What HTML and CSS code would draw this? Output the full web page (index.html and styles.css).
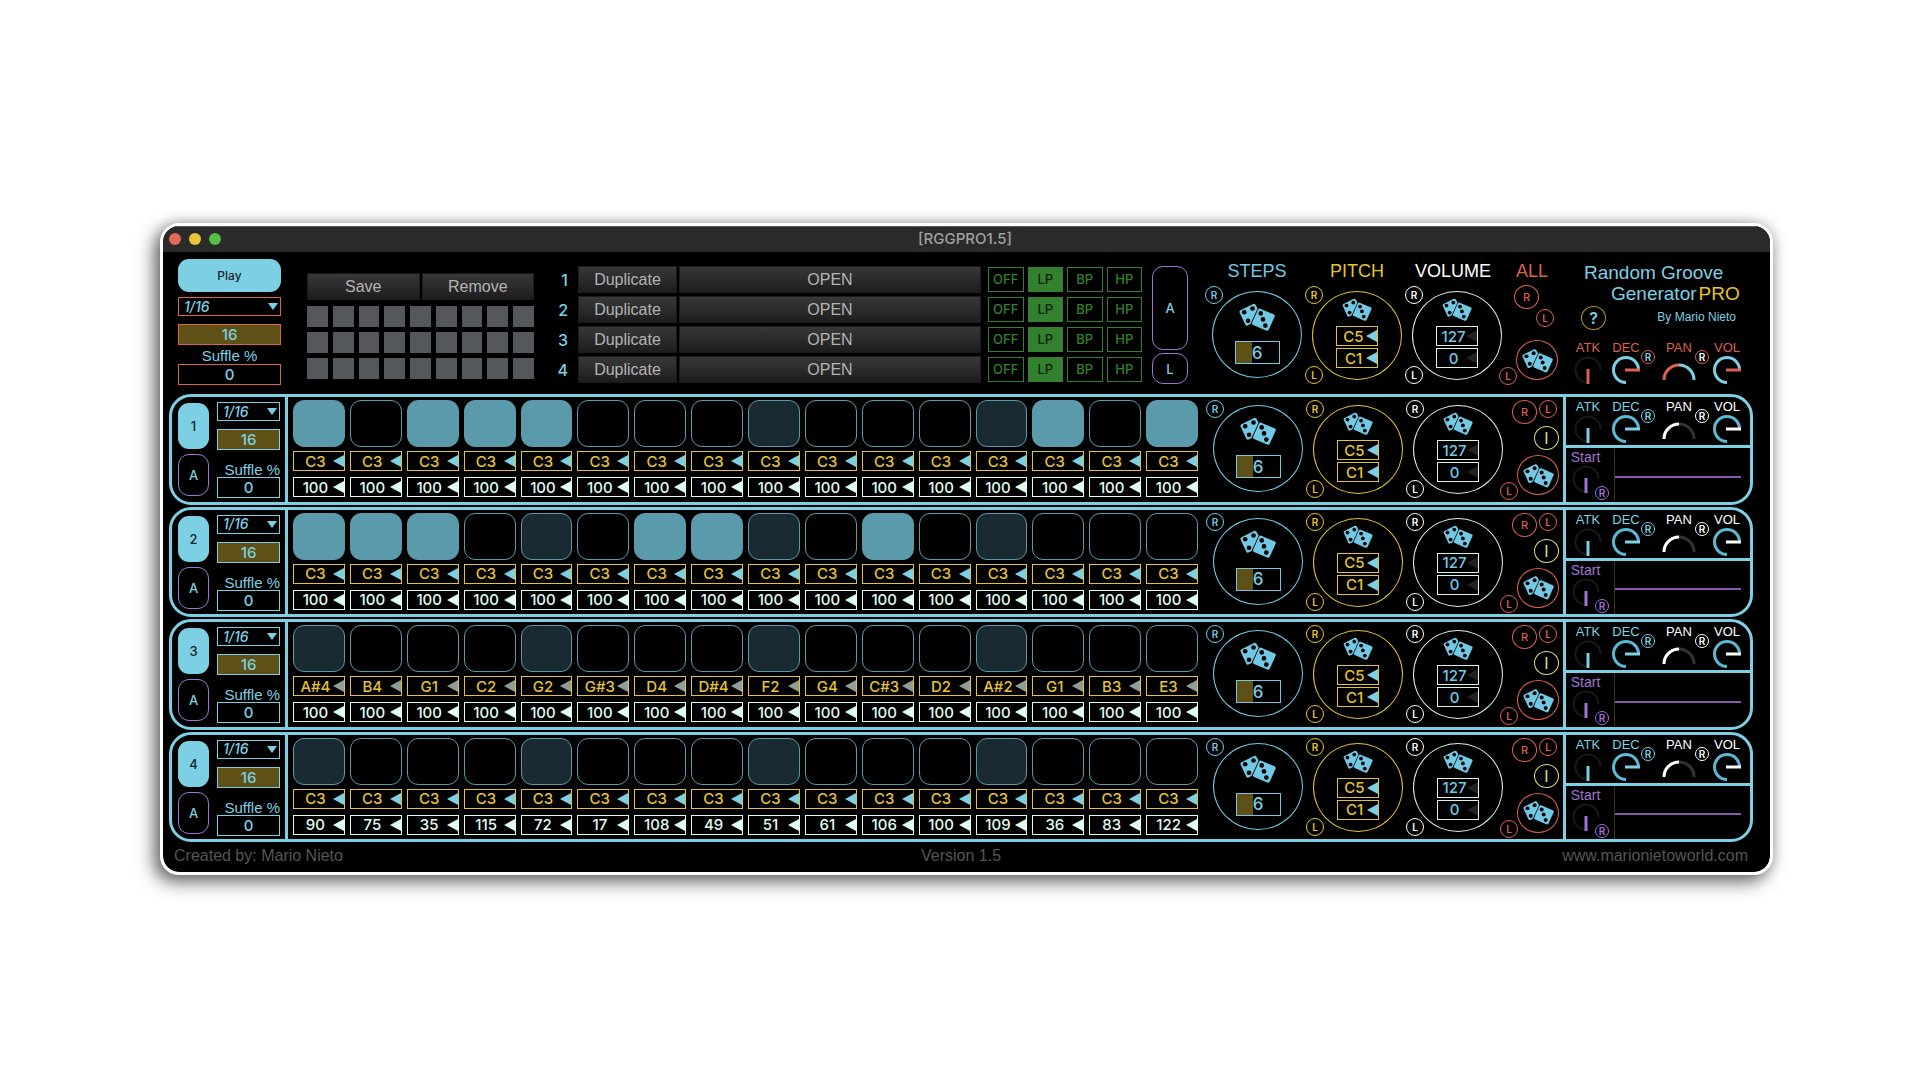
FILE: index.html
```
<!DOCTYPE html>
<html lang="en">
<head>
<meta charset="utf-8">
<meta name="viewport" content="width=device-width, initial-scale=1">
<title>RGGPRO1.5</title>
<link rel="stylesheet" href="styles.css">
</head>
<body>
<svg class="defs" aria-hidden="true">
  <symbol id="dice" viewBox="0 0 36 28">
    <path class="die" d="M1 7.500L14 1Q15.500 .5 16.300 1.600L18.600 5.500L11.500 21L8.500 22.600Q7 23.200 6.300 21.800L.6 9.500Q.1 8.100 1 7.500Z"/>
    <path class="die" d="M21.200 5.700L34.600 11.300Q36.300 12.200 35.600 13.800L29.800 26.600Q28.900 28.300 27.200 27.600L14 22Q12.500 21.200 13.100 19.700L18.900 6.700Q19.700 5.200 21.200 5.700Z"/>
    <g class="pip">
      <circle cx="5.200" cy="9.200" r="2.300"/><circle cx="13.500" cy="5.500" r="2.300"/><circle cx="9" cy="17.800" r="2.300"/>
      <circle cx="21.700" cy="10.400" r="2.300"/><circle cx="24" cy="16.400" r="2.300"/><circle cx="26.300" cy="22.600" r="2.300"/>
    </g>
  </symbol>
</svg>
<main class="window">
  <div class="titlebar">
    <div class="lights"><i class="light light-close"></i><i class="light light-min"></i><i class="light light-max"></i></div>
    <h1 class="title">[RGGPRO1.5]</h1>
  </div>

  <header class="top">
    <section class="transport">
      <button class="play">Play</button>
      <div class="clock" data-clock="master"></div>
    </section>
    <section class="presets">
      <div class="preset-actions"><button class="flat">Save</button><button class="flat">Remove</button></div>
      <div class="preset-grid" id="presets"></div>
    </section>
    <section class="files" id="files"></section>
    <section class="modes">
      <button class="mode mode-all">A</button>
      <button class="mode mode-lock">L</button>
    </section>
    <section class="dials" id="master-dials"></section>
    <section class="brand">
      <div class="brand-name">
        <p class="name-first">Random Groove</p>
        <p class="name-second">Generator<span class="pro">PRO</span></p>
      </div>
      <div class="brand-sub">
        <button class="round help">?</button>
        <p class="author">By Mario Nieto</p>
      </div>
      <div class="knobs knobs-master" id="master-knobs"></div>
    </section>
  </header>

  <div class="tracks" id="tracks"></div>

  <footer class="footer">
    <span>Created by: Mario Nieto</span>
    <span>Version 1.5</span>
    <a href="#site">www.marionietoworld.com</a>
  </footer>
</main>
<script src="script.js"></script>
</body>
</html>
```
FILE: styles.css
```
:root {
  --blue: #7dd0e4;
  --line: #5b9aab;
  --gold: #e5c52f;
  --brown: #5f5015;
  --red: #dc6150;
  --purple: #a074d6;
  --mint: #e0fdf0;
  --green: #33812f;
  --ui: Inter, Roboto, "Liberation Sans", sans-serif;
}
* { box-sizing: border-box; margin: 0; padding: 0; }
body {
  background: #fff;
  padding: 223px 147px 40px 160px;
  font-family: "Liberation Sans", Arial, sans-serif;
  color: var(--blue);
}
.defs { position: absolute; width: 0; height: 0; }
.die { fill: #73c9e4; }
.pip { fill: #000; }
button, input, select {
  font: inherit;
  color: inherit;
  background: none;
  border: 0;
  border-radius: 0;
  appearance: none;
  min-width: 0;
}
button { cursor: pointer; white-space: nowrap; }

.window {
  min-width: 1400px;
  border: 3px solid #fff;
  border-radius: 19px;
  background: #000;
  background-clip: padding-box;
  overflow: hidden;
  box-shadow: -6px 7px 18px rgba(0, 0, 0, .55), 0 0 14px rgba(0, 0, 0, .25);
}
.titlebar {
  display: grid;
  grid-template-columns: 1fr auto 1fr;
  align-items: center;
  height: 26px;
  padding: 0 9px 2px 6px;
  background: #2a2a2a;
  border-top: 1px solid #5c5c5c;
}
.lights { display: flex; gap: 8px; }
.light { width: 12px; height: 12px; border-radius: 50%; }
.light-close { background: #e0695a; }
.light-min { background: #e7c53c; }
.light-max { background: #56bd48; }
.title { font: 500 15px/18px var(--ui); color: #a0a0a0; }

/* header */
.top { display: flex; height: 142px; padding: 0 17px 0 15px; }
.transport { width: 103px; padding-top: 7px; flex: none; }
.play {
  display: block;
  width: 100%;
  height: 33px;
  margin-bottom: 5px;
  border-radius: 11px;
  background: var(--blue);
  color: #10242a;
  font: 500 12px/16px var(--ui);
}
.clock { display: flex; flex-direction: column; font-family: var(--ui); }
.select { position: relative; display: block; height: 19px; margin-bottom: 8px; }
.select::after {
  content: "";
  position: absolute;
  right: 3px;
  top: 6px;
  border: 5px solid transparent;
  border-top: 7px solid var(--blue);
  border-bottom: 0;
  pointer-events: none;
}
.select select {
  display: block;
  width: 100%;
  height: 19px;
  padding-left: 5px;
  border: 1px solid var(--edge);
  font: italic 500 14px/16px var(--ui);
}
.num {
  display: block;
  width: 100%;
  height: 21px;
  border: 1px solid var(--edge);
  text-align: center;
  font: 500 15px/18px var(--ui);
}
.num-length { background: var(--brown); }
.caption { display: block; height: 19px; font: 15px/22px "Liberation Sans", Arial, sans-serif; white-space: nowrap; text-align: center; }
.transport .clock { --edge: var(--red); }

.presets { width: 227px; margin-left: 26px; padding-top: 21px; flex: none; }
.preset-actions { display: grid; grid-template-columns: 1fr 1fr; gap: 2px; margin-bottom: 6px; }
.flat {
  height: 27px;
  background: linear-gradient(#383838, #1d1d1d);
  border: 1px solid #1c1c1c;
  color: #b4b4b4;
  font-size: 16px;
  line-height: 24px;
}
.preset-grid { display: grid; grid-template-columns: repeat(9, 1fr); gap: 5px; }
.preset { height: 21px; background: #54585c; }

.files { flex: 1; display: flex; flex-direction: column; gap: 3px; padding-top: 14px; }
.file { display: flex; align-items: center; gap: 2px; height: 27px; }
.file-no { width: 42px; padding-right: 8px; text-align: right; font: 500 16px/26px var(--ui); flex: none; }
.file .duplicate { width: 99px; flex: none; }
.file .open { flex: 1; padding-right: 0; }
.filter { display: grid; grid-template-columns: repeat(4, 1fr); gap: 4px; width: 154px; margin-left: 5px; border: 0; flex: none; }
.filter label { position: relative; color: var(--green); font: 500 13px/25px var(--ui); text-align: center; }
.filter span { display: block; height: 25px; line-height: 23px; border: 1px solid var(--green); }
.filter input { position: absolute; inset: 0; opacity: 0; }
.filter input:checked + span { background: var(--green); color: #0b210b; }

.modes { display: flex; flex-direction: column; gap: 3px; width: 36px; margin: 14px 16px 0 10px; flex: none; }
.mode { border: 1px solid var(--purple); border-radius: 11px; font: 500 13px/16px var(--ui); }
.mode-all { height: 84px; }
.mode-lock { height: 31px; }

/* randomiser dials */
.dials { display: flex; gap: 10px; width: 359px; padding: 8px 0 0 9px; flex: none; }
.top .dials { padding: 9px 0 0 8px; }
.dial-col { width: 90px; flex: none; }
.dial-head { height: 20px; margin-bottom: 10px; font-size: 18px; font-weight: 400; line-height: 21px; text-align: center; color: var(--tone); }
.dial-volume .dial-head { text-align: left; padding-left: 3px; color: #fff; }
.dial-steps { --tone: #73c9e4; }
.dial-pitch { --tone: var(--gold); }
.dial-volume { --tone: #d9f3e6; }
.dial {
  position: relative;
  display: flex;
  flex-direction: column;
  align-items: center;
  gap: 2px;
  width: 90px;
  height: 89px;
  padding-top: 6px;
  border: 1px solid var(--tone);
  border-radius: 50%;
}
.dial-steps .dial { height: 87px; padding-top: 11px; gap: 10px; }
.roll { display: block; height: 23px; margin-bottom: 3px; }
.roll svg { display: block; width: 30px; height: 23px; }
.dial-steps .roll { height: 28px; margin: 0; }
.dial-steps .roll svg { width: 36px; height: 28px; }
.amount { width: 45px; height: 23px; border: 1px solid var(--tone); background: linear-gradient(90deg, var(--brown) 16px, transparent 16px); text-align: center; font: 500 17px/20px var(--ui); }
.badge {
  display: block;
  width: 18px;
  height: 18px;
  border: 1px solid currentColor;
  border-radius: 50%;
  text-align: center;
  font: 600 10px/16px var(--ui);
  flex: none;
}
.dial .badge { position: absolute; left: -8px; color: var(--tone); }
.dial-volume .badge { color: #fff; }
.badge-r { top: -6px; }
.badge-l { bottom: -5px; }

/* value box with a drag arrow */
.value { position: relative; display: block; width: 100%; height: 20px; color: var(--tone); }
.value::after {
  content: "";
  position: absolute;
  right: 1px;
  top: 4px;
  border: 6px solid transparent;
  border-right: 11px solid var(--arrow);
  border-left: 0;
}
.value input {
  display: block;
  width: 100%;
  height: 100%;
  padding-right: 7px;
  border: 1px solid var(--tone);
  text-align: center;
  font: 500 15px/18px var(--ui);
}
.dial .value { width: 42px; --arrow: var(--blue); }
.dial-volume .value { --arrow: #222; }
.dial-volume .value input { color: #73c9e4; }

.all { display: flex; flex-direction: column; align-items: flex-end; width: 60px; margin-left: -10px; padding-right: 4px; color: var(--red); }
.all .dial-head { width: 60px; margin: 0 -4px 4px 0; color: var(--red); }
.round { width: 25px; height: 24px; border: 1px solid currentColor; border-radius: 50%; font: 500 11px/20px var(--ui); flex: none; }
.all-row { display: flex; align-items: flex-start; gap: 2px; margin-top: -5px; padding-right: 2px; }
.all-id { margin: 2px 0 5px; color: #d5e08a; font-size: 16px; font-weight: 400; }
.all-roll { display: flex; align-items: flex-end; height: 45px; }
.all-roll .badge { margin-right: -1px; }
.all-dice { display: grid; place-items: center; width: 42px; height: 40px; margin-bottom: 5px; border: 1px solid var(--red); border-radius: 50%; flex: none; }
.all-dice svg { width: 31px; height: 25px; }
.top .all .round { margin-right: 19px; }
.top .all .badge { margin-right: 4px; }
.top .all-roll { margin-top: 13px; }
.top .all .all-roll .badge { margin-right: -1px; }

/* brand */
.brand { width: 190px; padding-top: 10px; flex: none; }
.brand-name { font-size: 19px; line-height: 21px; }
.name-first { padding-left: 21px; }
.name-second { padding-left: 48px; white-space: nowrap; }
.pro { margin-left: 2px; color: var(--gold); }
.brand-sub { display: flex; justify-content: space-between; height: 35px; padding: 2px 17px 0 18px; }
.help { border-color: #b3962a; font-size: 16px; font-weight: 600; }
.author { font-size: 12px; line-height: 22px; }

/* knobs */
.knobs { display: grid; grid-template-columns: 38px 38px 68px 28px; padding: 2px 0 0 3px; height: 48px; }
.knobs-master { padding: 1px 0 0 6px; color: var(--red); }
.knob { position: relative; display: flex; flex-direction: column; align-items: center; font-size: 13px; line-height: 16px; }
.knob svg { display: block; height: 28px; flex: none; }
.knob path, .knob line { fill: none; stroke-width: 3; }
.knob .thin { stroke-width: 2; }
.knob input { position: absolute; inset: 16px 0 0; width: 100%; opacity: 0; }
.cell { position: relative; }
.cell .reset { position: absolute; top: 10px; }
.reset { width: 14px; height: 14px; line-height: 12px; font-size: 10px; }
.cell-dec .reset { left: 34px; }
.cell-pan .reset { left: 50px; }
.knobs .knob-white { color: #fff; }
.knobs-master .reset { border-color: var(--red); }
.knobs-master .cell-dec .reset { color: var(--blue); }
.knobs-master .cell-pan .reset { color: #fff; }

/* tracks */
.tracks { display: grid; grid-template-rows: repeat(4, 1fr); gap: 2px; height: 448px; padding: 0 17px 0 6px; }
.track {
  display: grid;
  grid-template-columns: 113px 1fr 359px 187px;
  border: 3px solid var(--blue);
  border-radius: 22px;
  min-height: 0;
}
.track-head { display: flex; gap: 8px; padding: 5px 0 0 6px; }
.toggles { display: flex; flex-direction: column; gap: 5px; width: 31px; padding-top: 1px; }
.toggles .mode { height: 42px; }
.toggles .track-on { height: 46px; border: 0; border-radius: 11px; background: var(--blue); color: #10242a; font: 500 13px/16px var(--ui); }
.track .clock { width: 63px; --edge: var(--blue); }
.track .caption { height: 27px; line-height: 39px; text-align: right; }
.steps { display: grid; grid-template-columns: repeat(16, 1fr); gap: 5px; padding: 3px 6px 0 5px; border-left: 3px solid var(--blue); }
.step { min-width: 0; --arrow: var(--blue); }
.pad { display: block; width: 100%; height: 47px; margin-bottom: 4px; border: 1px solid var(--line); border-radius: 11px; }
.pad-beat { background: #1a2a33; }
.pad:checked { background: var(--line); }
.step .pitch { --tone: var(--gold); margin-bottom: 6px; }
.step .velocity { --tone: var(--mint); --arrow: var(--mint); }
.track-muted .pitch { --arrow: #8f9f97; }

.sound { border-left: 3px solid var(--blue); min-width: 0; }
.sample { display: flex; height: 56px; border-top: 3px solid var(--blue); }
.start { position: relative; width: 48px; padding: 2px 9px 0 0; color: var(--purple); flex: none; }
.start .knob { font-size: 14px; line-height: 15px; }
.start .reset { position: absolute; left: 29px; top: 38px; }
.wave { flex: 1; display: flex; align-items: center; border-left: 1px solid #3d3010; padding: 4px 9px 0 0; }
.wave-line { flex: 1; height: 2px; background: #8659b0; }

.footer { display: grid; grid-template-columns: 1fr auto 1fr; padding: 4px 22px 7px 11px; color: #555; font-size: 16px; line-height: 19px; }
.footer a { color: inherit; text-decoration: none; text-align: right; }
```
FILE: script.js
```
const times = (n, fn) => Array.from({ length: n }, (_, i) => fn(i)).join('');
const dice = '<svg aria-hidden="true"><use href="#dice"/></svg>';

const clock = (id) => `
  <label class="select"><select aria-label="Rate ${id}"><option>1/16</option></select></label>
  <input class="num num-length" aria-label="Length ${id}" value="16">
  <label class="caption" for="shuffle-${id}">Suffle %</label>
  <input class="num" id="shuffle-${id}" value="0">`;

const value = (cls, label, v) =>
  `<label class="value ${cls}"><input aria-label="${label}" value="${v}"></label>`;

const badge = (t, cls = '') => `<button class="badge ${cls}">${t}</button>`;

function dial(kind, head, fields, lock) {
  return `<div class="dial-col dial-${kind}">${head ? `<h2 class="dial-head">${head}</h2>` : ''}
    <div class="dial">${badge('R', 'badge-r')}
      <button class="roll" aria-label="Randomise ${kind}">${dice}</button>${fields}
      ${lock ? badge('L', 'badge-l') : ''}</div></div>`;
}

function dials(master) {
  const h = (t) => (master ? t : '');
  const top = master
    ? `<h2 class="dial-head">ALL</h2><button class="round">R</button>${badge('L')}`
    : `<div class="all-row"><button class="round">R</button>${badge('L')}</div><button class="round all-id">I</button>`;
  return dial('steps', h('STEPS'), '<input class="amount" aria-label="Step count" value="6">', false)
    + dial('pitch', h('PITCH'), value('', 'Highest note', 'C5') + value('', 'Lowest note', 'C1'), true)
    + dial('volume', h('VOLUME'), value('', 'Loudest', '127') + value('', 'Softest', '0'), true)
    + `<div class="all">${top}<div class="all-roll">${badge('L')}
        <button class="all-dice" aria-label="Randomise all">${dice}</button></div></div>`;
}

const ring = 'M14 26.500A12.500 12.500 0 1 1 26.500 14';
const range = '<input type="range">';
const lowKnob = (label, color) => `<label class="knob">${label}
  <svg width="28" viewBox="0 0 28 28"><path class="thin" stroke="#151b1c" d="${ring}"/><line x1="14" y1="13" x2="14" y2="28" stroke="${color}"/></svg>${range}</label>`;
const highKnob = (label, arc, color, cls = '') => `<label class="knob ${cls}">${label}
  <svg width="28" viewBox="0 0 28 28"><path stroke="${arc}" d="${ring}"/><line x1="13" y1="14" x2="28" y2="14" stroke="${color}"/></svg>${range}</label>`;
const panKnob = (label, left, right, cls = '') => `<label class="knob ${cls}">${label}
  <svg width="36" viewBox="0 0 36 28"><path stroke="${right}" d="M18 9A15 15 0 0 1 33 24"/><path stroke="${left}" d="M3 24A15 15 0 0 1 18 9"/></svg>${range}</label>`;

const knobs = (point, arc, left, right, white, vol) => `
  <div class="cell">${lowKnob('ATK', point)}</div>
  <div class="cell cell-dec">${highKnob('DEC', arc, point)}${badge('R', 'reset')}</div>
  <div class="cell cell-pan ${white}">${panKnob('PAN', left, right)}${badge('R', 'reset')}</div>
  <div class="cell ${white}">${highKnob('VOL', arc, vol)}</div>`;

const hundred = Array(16).fill(100);
const c3 = Array(16).fill('C3');
const tracks = [
  { on: [0, 2, 3, 4, 13, 15], beat: [8, 12], notes: c3, vel: hundred },
  { on: [0, 1, 2, 6, 7, 10], beat: [4, 8, 12], notes: c3, vel: hundred },
  { on: [], beat: [0, 4, 8, 12], vel: hundred, muted: true,
    notes: ['A#4', 'B4', 'G1', 'C2', 'G2', 'G#3', 'D4', 'D#4', 'F2', 'G4', 'C#3', 'D2', 'A#2', 'G1', 'B3', 'E3'] },
  { on: [], beat: [0, 4, 8, 12], notes: c3,
    vel: [90, 75, 35, 115, 72, 17, 108, 49, 51, 61, 106, 100, 109, 36, 83, 122] },
];

const track = (t, n) => `
  <section class="track ${t.muted ? 'track-muted' : ''}">
    <div class="track-head">
      <div class="toggles"><button class="track-on">${n}</button><button class="mode">A</button></div>
      <div class="clock">${clock(n)}</div>
    </div>
    <div class="steps">${times(16, (i) => `<div class="step">
      <input type="checkbox" class="pad ${t.beat.includes(i) ? 'pad-beat' : ''}" aria-label="Track ${n} step ${i + 1}" ${t.on.includes(i) ? 'checked' : ''}>
      ${value('pitch', 'Note', t.notes[i])}${value('velocity', 'Velocity', t.vel[i])}</div>`)}</div>
    <div class="dials">${dials(false)}</div>
    <div class="sound">
      <div class="knobs">${knobs('#7dd0e4', '#5cb9d3', '#fff', '#333', 'knob-white', '#fff')}</div>
      <div class="sample">
        <div class="start">${lowKnob('Start', '#a074d6')}${badge('R', 'reset')}</div>
        <div class="wave"><div class="wave-line"></div></div>
      </div>
    </div>
  </section>`;

const file = (i) => `
  <div class="file"><span class="file-no">${i + 1}</span>
    <button class="flat duplicate">Duplicate</button><button class="flat open">OPEN</button>
    <fieldset class="filter" aria-label="Filter ${i + 1}">${['OFF', 'LP', 'BP', 'HP'].map((f) =>
      `<label><input type="radio" name="filter-${i}" ${f === 'LP' ? 'checked' : ''}><span>${f}</span></label>`).join('')}</fieldset>
  </div>`;

const fill = (sel, html) => { document.querySelector(sel).innerHTML = html; };
fill('[data-clock="master"]', clock('master'));
fill('#presets', times(27, (i) => `<button class="preset" aria-label="Preset ${i + 1}"></button>`));
fill('#files', times(4, file));
fill('#master-dials', dials(true));
fill('#master-knobs', knobs('#dc6150', '#7dd0e4', '#dc6150', '#7dd0e4', '', '#dc6150'));
fill('#tracks', tracks.map((t, i) => track(t, i + 1)).join(''));
```
